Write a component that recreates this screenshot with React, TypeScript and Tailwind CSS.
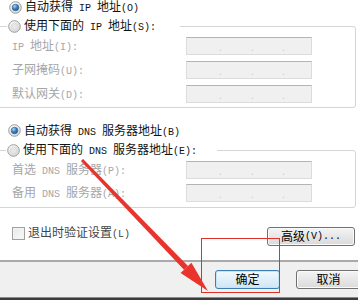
import React from "react";

const FONT = "font-['Liberation_Sans','Noto_Sans_CJK_SC',sans-serif]";

function T({ s }: { s: string }) {
  const parts = s.split(/([\x20-\x7e]+)/);
  return (
    <>
      {parts.map((p, i) =>
        /^[\x20-\x7e]+$/.test(p) ? (
          <span key={i} className="inline-block font-['Liberation_Mono',monospace] text-[10px] leading-[9px] whitespace-pre">
            {p}
          </span>
        ) : (
          <span key={i} className="inline-block leading-[14px]">
            {p}
          </span>
        )
      )}
    </>
  );
}

function Radio({ checked, id }: { checked?: boolean; id: string }) {
  return (
    <svg width="13" height="13" viewBox="0 0 13 13" className="shrink-0">
      <defs>
        <radialGradient id={`bg${id}`} cx="0.35" cy="0.3" r="0.8">
          <stop offset="0" stopColor="#ffffff" />
          <stop offset="1" stopColor="#d4d4d4" />
        </radialGradient>
        <radialGradient id={`dot${id}`} cx="0.35" cy="0.3" r="0.8">
          <stop offset="0" stopColor="#a8d8f8" />
          <stop offset="0.5" stopColor="#3b82c4" />
          <stop offset="1" stopColor="#134d8a" />
        </radialGradient>
      </defs>
      <circle cx="6.5" cy="6.5" r="5.8" fill={`url(#bg${id})`} stroke="#9c9c9c" strokeWidth="1" />
      {checked ? (
        <circle cx="6.5" cy="6.5" r="3.3" fill={`url(#dot${id})`} stroke="#2b5d8f" strokeWidth="0.6" />
      ) : (
        <circle cx="6.5" cy="6.5" r="3.3" fill="#e6e6e6" stroke="#cfcfcf" strokeWidth="0.6" />
      )}
    </svg>
  );
}

function IpBox() {
  return (
    <div className="w-[126px] h-[18px] bg-[#f0f0f0] border border-[#dcdcdc] border-t-[#b4b4b4] flex items-end pb-[3px] pl-[32px]">
      <span className="w-[32px] text-[10px] leading-[6px] text-[#c8c8c8]">.</span>
      <span className="w-[31px] text-[10px] leading-[6px] text-[#c8c8c8]">.</span>
      <span className="w-[20px] text-[10px] leading-[6px] text-[#c8c8c8]">.</span>
    </div>
  );
}

function FieldRow({ label, h }: { label: string; h: string }) {
  return (
    <div className={`flex items-center ${h}`}>
      <div className="w-[174px] text-[#a6a6a6]">
        <T s={label} />
      </div>
      <IpBox />
    </div>
  );
}

function Btn({ children, primary, w }: { children: React.ReactNode; primary?: boolean; w: string }) {
  return (
    <div
      className={`${w} h-[19px] rounded-[3px] border flex items-center justify-center text-[12px] text-black ${
        primary
          ? "border-[#3c7fb1] bg-linear-to-b from-[#f2f9fe] to-[#cfe6f6] shadow-[inset_0_0_0_1px_#c6e4f8]"
          : "border-[#707070] bg-linear-to-b from-[#f4f4f4] to-[#dadada] shadow-[inset_0_0_0_1px_#fbfbfb]"
      }`}
    >
      {children}
    </div>
  );
}

export default function App() {
  return (
    <div className={`relative w-[358px] h-[300px] overflow-hidden bg-white text-[12px] leading-[14px] ${FONT}`}>
      <div className="h-[260px] flex flex-col">
        {/* radio 1 */}
        <div className="h-[14px] flex items-center pl-[9px] gap-[3px] text-[#111]">
          <Radio checked id="r1" />
          <span>
            <T s="自动获得 IP 地址(O)" />
          </span>
        </div>
        <fieldset className="mt-[2px] ml-[-5px] w-[361px] border border-[#d5d5d5] rounded-[3px] px-0 pb-[1px]">
          <legend className="ml-[11px] pl-[1px] pr-[24px] h-[20px] flex items-center gap-[3px] text-[#111]">
            <Radio id="r2" />
            <span>
              <T s="使用下面的 IP 地址(S):" />
            </span>
          </legend>
          <div className="mt-[-2px] pl-[16px] flex flex-col">
            <FieldRow label="IP 地址(I):" h="h-[24px]" />
            <FieldRow label="子网掩码(U):" h="h-[24px]" />
            <FieldRow label="默认网关(D):" h="h-[24px]" />
          </div>
        </fieldset>

        {/* DNS */}
        <div className="mt-[16px] h-[13px] flex items-center pl-[8px] gap-[3px] text-[#111]">
          <Radio checked id="r3" />
          <span>
            <T s="自动获得 DNS 服务器地址(B)" />
          </span>
        </div>
        <fieldset className="mt-[3px] ml-[-5px] w-[361px] border border-[#d5d5d5] rounded-[3px] px-0 pb-[3px]">
          <legend className="ml-[10px] pl-[1px] pr-[20px] h-[20px] flex items-center gap-[3px] text-[#111]">
            <Radio id="r4" />
            <span>
              <T s="使用下面的 DNS 服务器地址(E):" />
            </span>
          </legend>
          <div className="mt-[-2px] pl-[16px] flex flex-col">
            <FieldRow label="首选 DNS 服务器(P):" h="h-[23px]" />
            <FieldRow label="备用 DNS 服务器(A):" h="h-[23px]" />
          </div>
        </fieldset>

        <div className="mt-[18px] flex items-start justify-between pl-[12px] pr-[3px]">
          <div className="flex items-center gap-[3px] text-[#444]">
            <div className="w-[13px] h-[13px] border border-[#a0a0a0] bg-linear-to-br from-[#e8e8e8] to-[#fafafa] shadow-[inset_0_0_0_1px_#f4f4f4]" />
            <span>
              <T s="退出时验证设置(L)" />
            </span>
          </div>
          <div className="mt-[1px]">
            <Btn w="w-[88px]">
              <T s="高级(V)..." />
            </Btn>
          </div>
        </div>
      </div>

      {/* footer */}
      <div className="h-[37px] border-t-2 border-[#a9a9a9] bg-[#f0f0f0] flex justify-end items-start pt-[8px] gap-[16px] mr-[-3px]">
        <Btn primary w="w-[65px]">
          确定
        </Btn>
        <Btn w="w-[65px]">取消</Btn>
      </div>
      <div className="h-[3px] bg-[#3c3c3c] border-t border-[#8a8a8a]" />

      {/* annotations */}
      <div className="absolute left-[201px] top-[238px] w-[79px] h-[55px] border border-[#e0302a]" />
      <svg className="absolute inset-0 pointer-events-none" width="358" height="300" viewBox="0 0 358 300">
        <polygon points="80.9,161.1 83.1,158.9 188,265.9 184,269.7" fill="#e8342c" />
        <polygon points="208,291 180.6,272.9 191.4,262.7" fill="#e8342c" />
      </svg>
    </div>
  );
}
